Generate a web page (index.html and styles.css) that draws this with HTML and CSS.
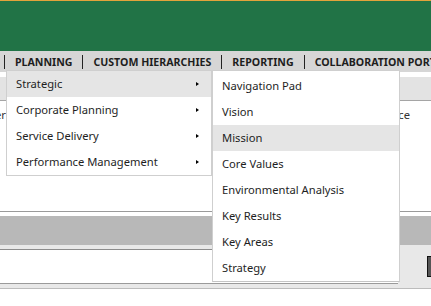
FILE: index.html
```html
<!DOCTYPE html>
<html lang="en">
<head>
    <meta charset="UTF-8">
    <title>Planning</title>
    <link rel="stylesheet" href="styles.css">
</head>
<body>
    <div class="top-bar"></div>

    <div class="nav-bar">
        <div class="nav-item">PLANNING</div>
        <div class="nav-item">CUSTOM HIERARCHIES</div>
        <div class="nav-item">REPORTING</div>
        <div class="nav-item">COLLABORATION PORTAL</div>
    </div>

    <div class="sub-bar"></div>

    <div class="grid-row">
        <div class="cell-first">Owner</div>
        <div class="cell-second">Performance</div>
    </div>

    <div class="section">
        <div class="section-head"></div>
        <div class="section-body">
            <div class="section-main">
                <div class="main-strip"></div>
                <div class="main-blank"></div>
                <div class="main-foot"></div>
            </div>
            <div class="section-side">
                <div class="side-button"></div>
            </div>
        </div>
    </div>

    <!-- Planning dropdown -->
    <div class="menu menu-main">
        <div class="menu-item active">Strategic <span class="arrow"></span></div>
        <div class="menu-item">Corporate Planning <span class="arrow"></span></div>
        <div class="menu-item">Service Delivery <span class="arrow"></span></div>
        <div class="menu-item">Performance Management <span class="arrow"></span></div>
    </div>

    <div class="menu menu-sub">
        <div class="menu-item">Navigation Pad</div>
        <div class="menu-item">Vision</div>
        <div class="menu-item active">Mission</div>
        <div class="menu-item">Core Values</div>
        <div class="menu-item">Environmental Analysis</div>
        <div class="menu-item">Key Results</div>
        <div class="menu-item">Key Areas</div>
        <div class="menu-item">Strategy</div>
    </div>
</body>
</html>
```

FILE: styles.css
```css
* {
    margin: 0;
    padding: 0;
    box-sizing: border-box;
}

body {
    font-family: "Segoe UI", "Noto Sans", sans-serif;
    font-size: 11.2px;
    color: #222;
    background: #fff;
    width: 431px;
    height: 306px;
    overflow: hidden;
    position: relative;
}

.top-bar {
    height: 51px;
    background: #217346;
    border-top: 1px solid #e3a33b;
}

.nav-bar {
    height: 21px;
    background: #d6d6d6;
    display: flex;
    align-items: center;
    padding-left: 4px;
    white-space: nowrap;
    overflow: hidden;
}

.nav-item {
    font-size: 10.6px;
    font-weight: bold;
    color: #1e1e1e;
    padding: 0 10px;
    border-left: 1px solid #222;
    line-height: 14px;
}

.sub-bar {
    margin-top: 5px;
    height: 24px;
    background: #e3e3e3;
    border-bottom: 1px solid #a5a5a5;
}

.grid-row {
    height: 110px;
    display: flex;
    padding-top: 6px;
    color: #333;
    overflow: hidden;
}

.cell-first {
    width: 6px;
    display: flex;
    justify-content: flex-end;
    white-space: nowrap;
}

.cell-second {
    width: 404px;
    display: flex;
    justify-content: flex-end;
    white-space: nowrap;
}

.section-head {
    height: 34px;
    border-top: 1px solid #9a9a9a;
    border-bottom: 29px solid #b8b8b8;
}

.section-body {
    display: flex;
    border-bottom: 1px solid #bcbcbc;
}

.section-main {
    flex: 1;
}

.main-strip {
    height: 5px;
    background: #e8e8e8;
    border-bottom: 1px solid #8c8c8c;
}

.main-blank {
    height: 34px;
    border-bottom: 1px solid #9a9a9a;
}

.main-foot {
    height: 4px;
    background: #e8e8e8;
}

.section-side {
    width: 33px;
    background: #e8e8e8;
    padding: 11px 0 0 29px;
}

.side-button {
    width: 8px;
    height: 21px;
    background: #555;
    border: 1px solid #111;
}

.menu {
    position: absolute;
    top: 70px;
    background: #fff;
    border: 1px solid #cfcfcf;
}

.menu-main {
    left: 6px;
    width: 206px;
}

.menu-sub {
    left: 212px;
    width: 188px;
    padding-top: 2px;
    border-bottom-color: #c4c4c4;
}

.menu-item {
    height: 26px;
    display: flex;
    align-items: center;
    justify-content: space-between;
    padding: 0 12px 1px 9px;
    color: #1e1e1e;
    white-space: nowrap;
}

.menu-item.active {
    background: #e5e5e5;
}

.arrow {
    width: 0;
    height: 0;
    border-left: 3px solid #000;
    border-top: 2.5px solid transparent;
    border-bottom: 2.5px solid transparent;
}
```
